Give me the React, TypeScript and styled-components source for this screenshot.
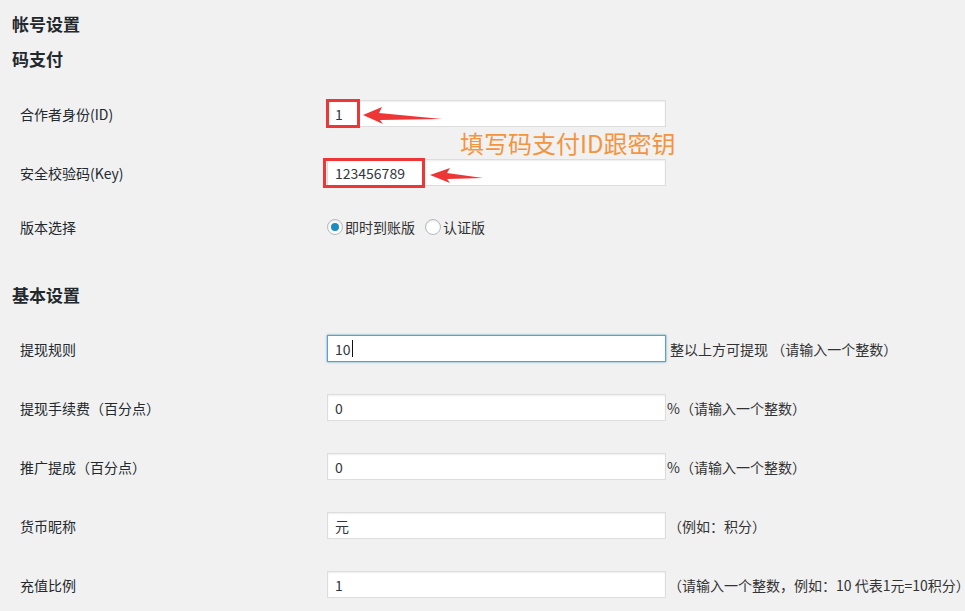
import styled, { createGlobalStyle } from "styled-components";

const GlobalStyle = createGlobalStyle`
  html, body {
    margin: 0;
    padding: 0;
    background: #f1f1f1;
    overflow: hidden;
  }
  body {
    font-family: "Noto Sans CJK SC", "Noto Sans", sans-serif;
    color: #23282d;
    font-size: 14px;
  }
`;

const Page = styled.div`
  position: relative;
  width: 965px;
  height: 611px;
  padding: 12px 0 0 12px;
  box-sizing: border-box;
  white-space: nowrap;
`;

const Title = styled.h2<{ $gap?: number }>`
  margin: ${(p) => p.$gap ?? 0}px 0 0;
  font-size: 17px;
  font-weight: 700;
  line-height: 24px;
  color: #23282d;
`;

const Form = styled.div<{ $gap: number }>`
  display: flex;
  flex-direction: column;
  margin-top: ${(p) => p.$gap}px;
`;

const Row = styled.div<{ $h?: number }>`
  display: flex;
  align-items: center;
  height: ${(p) => p.$h ?? 59}px;
  padding-left: 8px;
`;

const Label = styled.div`
  width: 307px;
  flex-shrink: 0;
  font-size: 14px;
  color: #23282d;
`;

const Field = styled.div<{ $focused?: boolean }>`
  display: flex;
  align-items: center;
  box-sizing: border-box;
  width: 339px;
  height: 27px;
  padding: 0 7px;
  background: #fff;
  border: 1px solid ${(p) => (p.$focused ? "#5b9dd9" : "#ddd")};
  box-shadow: ${(p) =>
    p.$focused ? "0 0 2px rgba(30, 140, 190, 0.8)" : "inset 0 1px 2px rgba(0, 0, 0, 0.07)"};
  font-size: 14px;
  color: #32373c;
  flex-shrink: 0;
`;

const Caret = styled.span`
  display: inline-block;
  width: 1px;
  height: 17px;
  margin-left: 1px;
  background: #111;
`;

const Note = styled.span<{ $gap?: number }>`
  margin-left: ${(p) => p.$gap ?? 0}px;
  font-size: 14px;
  color: #333;
`;

const Radios = styled.div`
  display: flex;
  align-items: center;
  gap: 10px;
`;

const RadioLabel = styled.label`
  display: flex;
  align-items: center;
  gap: 2px;
  font-size: 14px;
  color: #333;
`;

const RadioDot = styled.span<{ $checked?: boolean }>`
  position: relative;
  width: 16px;
  height: 16px;
  box-sizing: border-box;
  border-radius: 50%;
  border: 1px solid #b4b9be;
  background: #fff;
  box-shadow: inset 0 1px 2px rgba(0, 0, 0, 0.1);
  &::after {
    content: "";
    display: ${(p) => (p.$checked ? "block" : "none")};
    position: absolute;
    left: 3px;
    top: 3px;
    width: 8px;
    height: 8px;
    border-radius: 50%;
    background: #1e8cbe;
  }
`;

/* annotation layer drawn over the screenshot */
const Mark = styled.div<{ $x: number; $y: number; $w: number; $h: number }>`
  position: absolute;
  left: ${(p) => p.$x}px;
  top: ${(p) => p.$y}px;
  width: ${(p) => p.$w}px;
  height: ${(p) => p.$h}px;
  box-sizing: border-box;
  border: 3px solid #ee3636;
`;

const Hint = styled.div`
  position: absolute;
  left: 460px;
  top: 130px;
  font-size: 24px;
  line-height: 26px;
  color: #f5943f;
`;

const Arrows = styled.svg`
  position: absolute;
  left: 0;
  top: 0;
  pointer-events: none;
`;

type Item = { label: string; value: string; note?: string; gap?: number; focused?: boolean };

const basic: Item[] = [
  { label: "提现规则", value: "10", note: "整以上方可提现 （请输入一个整数）", gap: 4, focused: true },
  { label: "提现手续费（百分点）", value: "0", note: "%（请输入一个整数）", gap: 1 },
  { label: "推广提成（百分点）", value: "0", note: "%（请输入一个整数）", gap: 1 },
  { label: "货币昵称", value: "元", note: "（例如：积分）", gap: 2 },
  { label: "充值比例", value: "1", note: "（请输入一个整数，例如：10 代表1元=10积分）", gap: 2 },
];

export default function App() {
  return (
    <Page>
      <GlobalStyle />
      <Title>帐号设置</Title>
      <Title $gap={11}>码支付</Title>
      <Form $gap={13}>
        <Row>
          <Label>合作者身份(ID)</Label>
          <Field>1</Field>
        </Row>
        <Row>
          <Label>安全校验码(Key)</Label>
          <Field>123456789</Field>
        </Row>
        <Row $h={49}>
          <Label>版本选择</Label>
          <Radios>
            <RadioLabel>
              <RadioDot $checked />
              即时到账版
            </RadioLabel>
            <RadioLabel>
              <RadioDot />
              认证版
            </RadioLabel>
          </Radios>
        </Row>
      </Form>

      <Title $gap={32}>基本设置</Title>
      <Form $gap={12}>
        {basic.map((it) => (
          <Row key={it.label}>
            <Label>{it.label}</Label>
            <Field $focused={it.focused}>
              {it.value}
              {it.focused && <Caret />}
            </Field>
            {it.note && <Note $gap={it.gap}>{it.note}</Note>}
          </Row>
        ))}
      </Form>

      <Mark $x={326} $y={99} $w={34} $h={29} />
      <Mark $x={323} $y={158} $w={102} $h={30} />
      <Hint>填写码支付ID跟密钥</Hint>
      <Arrows width="965" height="611" viewBox="0 0 965 611">
        <polygon fill="#ee3636" points="363,115 382,107 379,113 442,119 380,120 383,124" />
        <polygon fill="#ee3636" points="430,175 450,168 447,173 483,178 447,179 450,183" />
      </Arrows>
    </Page>
  );
}
